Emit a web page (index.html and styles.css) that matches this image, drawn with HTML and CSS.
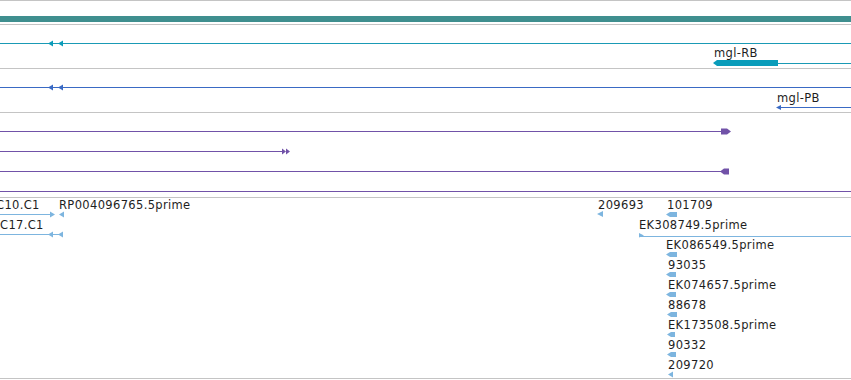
FILE: index.html
```html
<!DOCTYPE html>
<html lang="en">
<head>
  <meta charset="UTF-8">
  <title>Track view</title>
  <link rel="stylesheet" href="styles.css">
</head>
<body>
  <div class="ruler">
    <div class="ruler-bar"></div>
  </div>

  <!-- transcripts -->
  <div class="track track-a">
    <svg width="851" height="43">
      <line class="line teal" x1="0" y1="18.5" x2="851" y2="18.5"/>
      <polygon class="teal-fill" points="48,18.5 53,15.5 53,21.5"/>
      <polygon class="teal-fill" points="58,18.5 63,15.5 63,21.5"/>
      <polygon class="teal-fill" points="713,38 717,35 778,35 778,41 717,41"/>
      <line class="line teal" x1="778" y1="38.5" x2="851" y2="38.5"/>
    </svg>
    <span class="label" style="left: 714px; top: 21px;">mgl-RB</span>
  </div>

  <div class="track track-b">
    <svg width="851" height="43">
      <line class="line blue" x1="0" y1="18.5" x2="851" y2="18.5"/>
      <polygon class="blue-fill" points="48,18.5 53,15.5 53,21.5"/>
      <polygon class="blue-fill" points="58,18.5 63,15.5 63,21.5"/>
      <polygon class="blue-fill" points="776,38.5 781,36 781,41"/>
      <line class="line blue" x1="780" y1="38.5" x2="851" y2="38.5"/>
    </svg>
    <span class="label" style="left: 777px; top: 22px;">mgl-PB</span>
  </div>

  <!-- proteins -->
  <div class="track track-c">
    <svg width="851" height="84">
      <line class="line purple" x1="0" y1="18.5" x2="722" y2="18.5"/>
      <polygon class="purple-fill" points="721,15.5 727,15.5 731,18.5 727,21.5 721,21.5"/>
      <line class="line purple" x1="0" y1="38.5" x2="283" y2="38.5"/>
      <polygon class="purple-fill" points="282,35.5 286,38.5 282,41.5"/>
      <polygon class="purple-fill" points="286,35.5 290,38.5 286,41.5"/>
      <line class="line purple" x1="0" y1="58.5" x2="721" y2="58.5"/>
      <polygon class="purple-fill" points="720,58.5 724,55.5 729,55.5 729,61.5 724,61.5"/>
      <line class="line purple" x1="0" y1="78.5" x2="851" y2="78.5"/>
    </svg>
  </div>

  <!-- ESTs -->
  <div class="track track-d">
    <svg width="851" height="180">
      <line class="line sky" x1="0" y1="16.5" x2="51" y2="16.5"/>
      <polygon class="sky-fill" points="50,13.5 55,16.5 50,19.5"/>
      <polygon class="sky-fill" points="59,16.5 64,13.5 64,19.5"/>
      <polygon class="sky-fill" points="597,16 603,13 603,19"/>
      <polygon class="sky-fill" points="666,16.5 670,14 677,14 677,19 670,19"/>

      <line class="line sky" x1="0" y1="36.5" x2="60" y2="36.5"/>
      <polygon class="sky-fill" points="48,36.5 53,33.5 53,39.5"/>
      <polygon class="sky-fill" points="58,36.5 63,33.5 63,39.5"/>
      <line class="line sky" x1="640" y1="38.5" x2="851" y2="38.5"/>
      <polygon class="sky-fill" points="639,35 644,37.5 639,39.5"/>

      <polygon class="sky-fill" points="666,56.5 670,54 677,54 677,59 670,59"/>
      <polygon class="sky-fill" points="666,76.5 670,74 676,74 676,79 670,79"/>
      <polygon class="sky-fill" points="666,96.5 670,94 676,94 676,99 670,99"/>
      <polygon class="sky-fill" points="667,116.5 671,114 677,114 677,119 671,119"/>
      <polygon class="sky-fill" points="667,136.5 671,134 675,134 675,139 671,139"/>
      <polygon class="sky-fill" points="667,156.5 671,154 676,154 676,159 671,159"/>
      <polygon class="sky-fill" points="668,176.5 673,173.5 673,179.5"/>
    </svg>
    <span class="label" style="left: -4px; top: 0px;">C10.C1</span>
    <span class="label" style="left: 59px; top: 0px;">RP004096765.5prime</span>
    <span class="label" style="left: 598px; top: 0px;">209693</span>
    <span class="label" style="left: 667px; top: 0px;">101709</span>
    <span class="label" style="left: 0px; top: 20px;">C17.C1</span>
    <span class="label" style="left: 639px; top: 20px;">EK308749.5prime</span>
    <span class="label" style="left: 666px; top: 40px;">EK086549.5prime</span>
    <span class="label" style="left: 668px; top: 60px;">93035</span>
    <span class="label" style="left: 668px; top: 80px;">EK074657.5prime</span>
    <span class="label" style="left: 668px; top: 100px;">88678</span>
    <span class="label" style="left: 668px; top: 120px;">EK173508.5prime</span>
    <span class="label" style="left: 668px; top: 140px;">90332</span>
    <span class="label" style="left: 668px; top: 160px;">209720</span>
  </div>
</body>
</html>
```

FILE: styles.css
```css
body {
  margin: 0;
  background: #ffffff;
  font-family: "DejaVu Sans", sans-serif;
  font-size: 11.5px;
  color: #1e1e1e;
  overflow: hidden;
}

.ruler {
  height: 23px;
  border-top: 1px solid #c4c4c4;
  border-bottom: 1px solid #c4c4c4;
}

.ruler-bar {
  margin-top: 15px;
  height: 6px;
  background: #3f8f8f;
}

.track {
  position: relative;
  overflow: hidden;
  border-bottom: 1px solid #c4c4c4;
}

.track svg {
  display: block;
}

.track-a,
.track-b {
  height: 43px;
}

.track-c {
  height: 84px;
}

.track-d {
  height: 180px;
}

.label {
  position: absolute;
  line-height: 15px;
  white-space: nowrap;
  letter-spacing: 0.35px;
}

.line {
  stroke-width: 1;
  shape-rendering: crispEdges;
}

.teal { stroke: #1a9ab5; }
.teal-fill { fill: #0a9cba; }

.blue { stroke: #3a6ac4; }
.blue-fill { fill: #3a6ac4; }

.purple { stroke: #7152a8; }
.purple-fill { fill: #7152a8; }

.sky { stroke: #7db5df; }
.sky-fill { fill: #7db5df; }
```
